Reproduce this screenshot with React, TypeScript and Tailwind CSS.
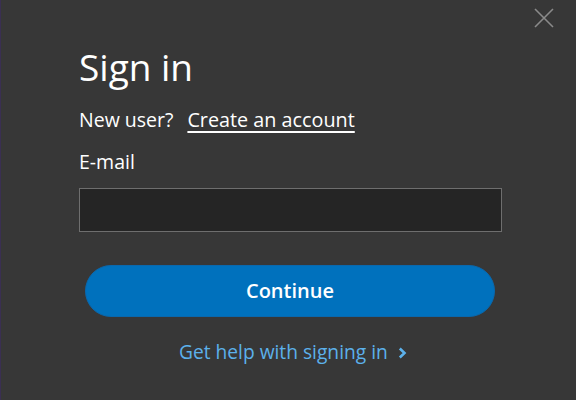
export default function App() {
  return (
    <div
      className="w-[576px] h-[400px] bg-[#373737] border-l border-[#3a2f52] relative overflow-hidden"
      style={{ fontFamily: '"Open Sans", "Noto Sans", sans-serif' }}
    >
      <button className="absolute right-[21px] top-[7px] w-[22px] h-[22px] text-[#8a8a8a]" aria-label="Close">
        <svg viewBox="0 0 22 22" width="22" height="22" fill="none" stroke="currentColor" strokeWidth="1.6">
          <path d="M2 2 L20 20 M20 2 L2 20" />
        </svg>
      </button>
      <div className="flex flex-col pl-[78px] pt-[44px] pr-[73px]">
        <h1 className="text-[37px] leading-[46px] text-white font-normal">Sign in</h1>
        <div className="mt-[16px] flex items-center text-[19.5px] leading-[28px] text-white">
          <span>New user?</span>
          <a className="ml-[14px] text-[19.8px] underline underline-offset-[4px] decoration-[1.5px]">Create an account</a>
        </div>
        <label className="mt-[14px] text-[19.5px] leading-[28px] text-white">E-mail</label>
        <input className="mt-[12px] w-[423px] h-[44px] bg-[#252525] border border-[#6e6e6e] outline-none text-white px-2" />
        <button className="mt-[33px] ml-[6px] w-[410px] h-[52px] rounded-full bg-[#0071bd] border border-[#0a68ad] text-white text-[20px] font-semibold">
          Continue
        </button>
        <div className="mt-[21px] ml-[100px] flex items-center text-[#5cb1eb] text-[19.2px] leading-[28px]">
          <span>Get help with signing in</span>
          <svg className="ml-[10px] mt-[2px]" width="9" height="12" viewBox="0 0 9 12" fill="none" stroke="currentColor" strokeWidth="2.6">
            <path d="M1.8 1.5 L6.5 6 L1.8 10.5" />
          </svg>
        </div>
      </div>
    </div>
  );
}
